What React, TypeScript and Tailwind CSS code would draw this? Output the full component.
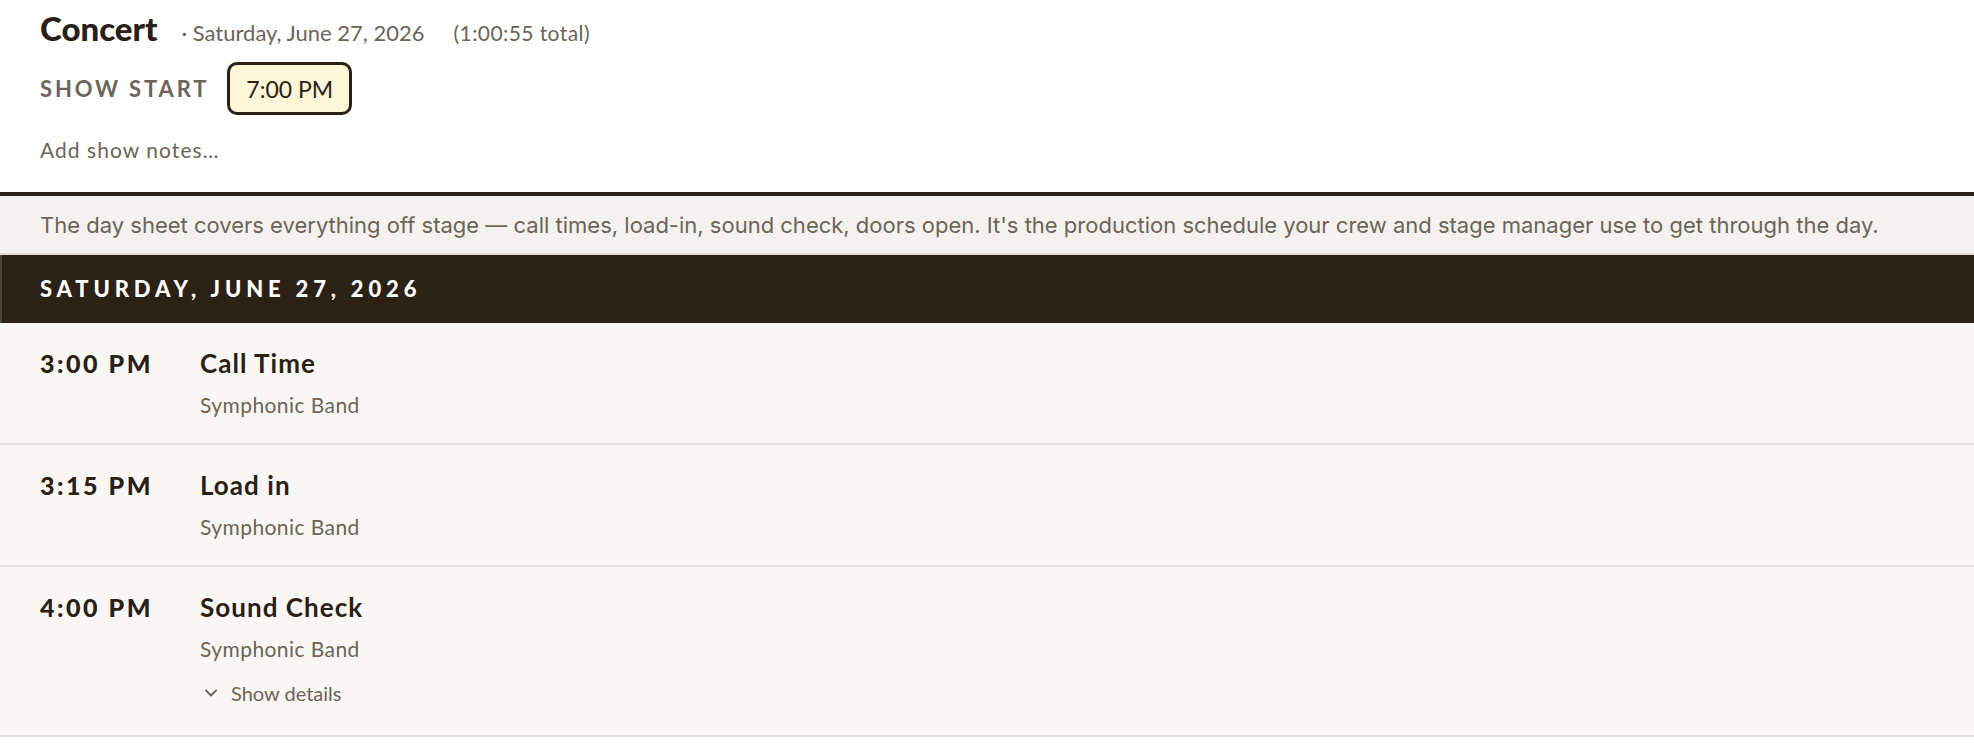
import React from 'react';

const events = [
  { time: '3:00 PM', title: 'Call Time', who: 'Symphonic Band', details: false },
  { time: '3:15 PM', title: 'Load in', who: 'Symphonic Band', details: false },
  { time: '4:00 PM', title: 'Sound Check', who: 'Symphonic Band', details: true },
];

const gill = "font-['Lato','Noto_Sans',sans-serif]";

function Chevron() {
  return (
    <svg width="12" height="8" viewBox="0 0 12 8" fill="none" stroke="currentColor" strokeWidth="1.8" strokeLinecap="round" strokeLinejoin="round">
      <polyline points="1,1.5 6,6.5 11,1.5" />
    </svg>
  );
}

export default function App() {
  return (
    <div className={`${gill} min-h-screen bg-white text-[#2a2015]`}>
      {/* show header */}
      <div className="px-10 pt-[10px] pb-[28px]">
        <div className="flex items-baseline">
          <h1 className="text-[33px] leading-[36px] font-black">Concert</h1>
          <span className="ml-[24px] text-[22px] text-[#6b6459]">· Saturday, June 27, 2026</span>
          <span className="ml-[29px] text-[21px] tracking-[0.02em] text-[#6b6459]">(1:00:55 total)</span>
        </div>
        <div className="mt-[13px] flex items-center gap-[18px]">
          <span className="text-[22px] font-bold tracking-[0.13em] text-[#6b6459]">SHOW START</span>
          <button className="h-[53px] rounded-[10px] border-[3px] border-[#2a2015] bg-[#fdf6d8] px-[16px] text-[23px] leading-[30px] text-[#2a2015]">
            7:00 PM
          </button>
        </div>
        <div className="mt-[21px] text-[21px] leading-[28px] tracking-[0.05em] text-[#6b6459]">Add show notes…</div>
      </div>

      {/* day sheet */}
      <div className="border-t-4 border-[#2a2015]">
        <p className="border-b-2 border-[#dddad4] bg-[#f3f2ee] px-10 pt-[15px] pb-[14px] font-['Inter',sans-serif] text-[22px] leading-[28px] text-[#6b6459]">
          The day sheet covers everything off stage — call times, load-in, sound check, doors open. It's the production schedule your crew and stage manager use to get through the day.
        </p>
        <div className="border-l-2 border-[#4a4438] bg-[#2b2114] pl-[38px] py-5 text-[22px] leading-[28px] font-black tracking-[0.22em] text-white">
          SATURDAY, JUNE 27, 2026
        </div>
        {events.map((ev) => (
          <div key={ev.time} className="flex border-b-2 border-[#e6e3dd] bg-[#f9f7f3] px-10 pt-6 pb-6">
            <div className="w-[160px] text-[25px] leading-[32px] font-black tracking-[0.1em]">{ev.time}</div>
            <div className="flex flex-col">
              <div className="text-[26px] leading-[32px] font-bold tracking-[0.04em]">{ev.title}</div>
              <div className="mt-3 text-[21px] leading-[28px] tracking-[0.02em] text-[#6b6459]">{ev.who}</div>
              {ev.details && (
                <button className="mt-3 flex items-center gap-[14px] py-1.5 pl-[5px] text-[20px] leading-[24px] text-[#6b6459]">
                  <Chevron />
                  Show details
                </button>
              )}
            </div>
          </div>
        ))}
      </div>
    </div>
  );
}
